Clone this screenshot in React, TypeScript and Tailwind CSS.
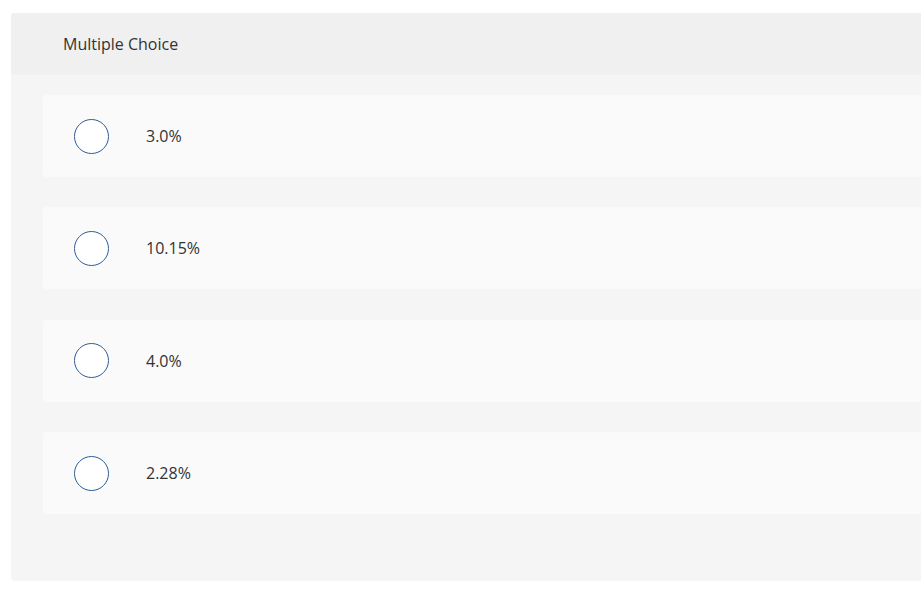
const OPTIONS = ["3.0%", "10.15%", "4.0%", "2.28%"];

export default function App() {
  return (
    <div
      className="h-[593px] w-[921px] overflow-hidden bg-white pl-[11px] pt-[13px]"
      style={{ fontFamily: "'Open Sans', Lato, sans-serif" }}
    >
      <div className="w-[960px] overflow-hidden rounded-[4px] bg-[#f5f5f5]">
        <div className="flex h-[62px] items-center bg-[#f0f0f0] pl-[52px] text-[16px] text-[#333333]">
          Multiple Choice
        </div>
        <div className="flex flex-col gap-[30.4px] pb-[67px] pl-[32px] pt-[20px]">
          {OPTIONS.map((option) => (
            <label
              key={option}
              className="flex h-[82px] items-center rounded-[3px] bg-[#fafafa] pl-[31px]"
            >
              <span className="h-[35px] w-[35px] shrink-0 rounded-full border-[1.5px] border-[#2b5f94] bg-white" />
              <span className="ml-[37px] text-[16px] text-[#333333]">{option}</span>
            </label>
          ))}
        </div>
      </div>
    </div>
  );
}
